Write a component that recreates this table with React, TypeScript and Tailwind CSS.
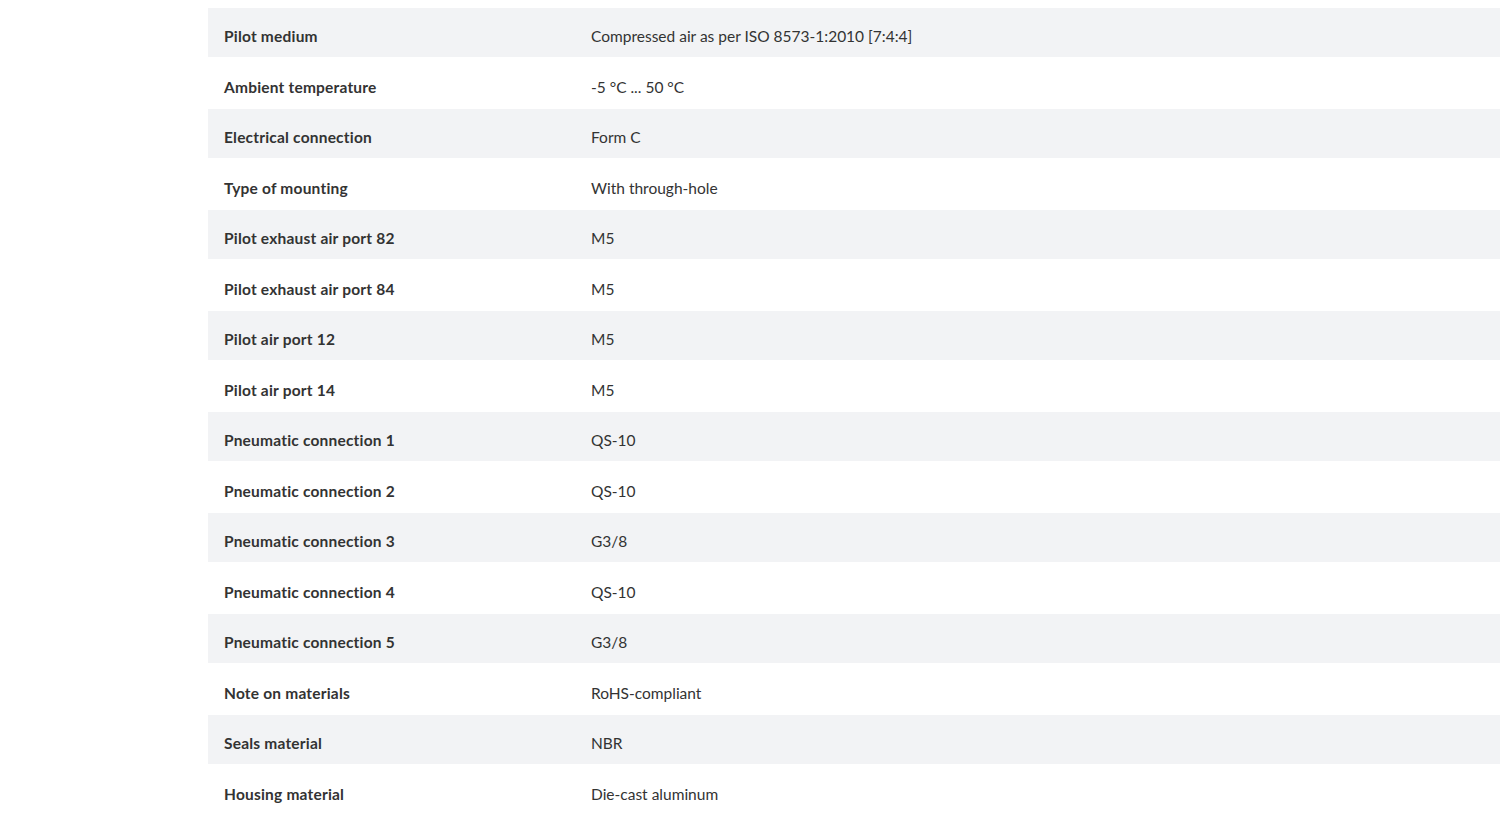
const rows: [string, string][] = [
  ['Pilot medium', 'Compressed air as per ISO 8573-1:2010 [7:4:4]'],
  ['Ambient temperature', '-5 °C ... 50 °C'],
  ['Electrical connection', 'Form C'],
  ['Type of mounting', 'With through-hole'],
  ['Pilot exhaust air port 82', 'M5'],
  ['Pilot exhaust air port 84', 'M5'],
  ['Pilot air port 12', 'M5'],
  ['Pilot air port 14', 'M5'],
  ['Pneumatic connection 1', 'QS-10'],
  ['Pneumatic connection 2', 'QS-10'],
  ['Pneumatic connection 3', 'G3/8'],
  ['Pneumatic connection 4', 'QS-10'],
  ['Pneumatic connection 5', 'G3/8'],
  ['Note on materials', 'RoHS-compliant'],
  ['Seals material', 'NBR'],
  ['Housing material', 'Die-cast aluminum'],
];

export default function App() {
  return (
    <div className="h-[828px] w-[1500px] overflow-hidden bg-white pl-[208px] pt-[8px] font-['Lato',sans-serif] text-[15.5px] text-[#333333]">
      <div className="flex w-[1320px] flex-col">
        {rows.map(([label, value], i) => (
          <div
            key={label}
            className={
              i % 2 === 0
                ? 'flex h-[49px] items-center bg-[#f2f3f5] pt-[8px]'
                : 'flex h-[52px] items-center bg-white pt-[10px]'
            }
          >
            <div className="w-[383px] pl-4 font-bold tracking-[0.2px]">{label}</div>
            <div>{value}</div>
          </div>
        ))}
      </div>
    </div>
  );
}
